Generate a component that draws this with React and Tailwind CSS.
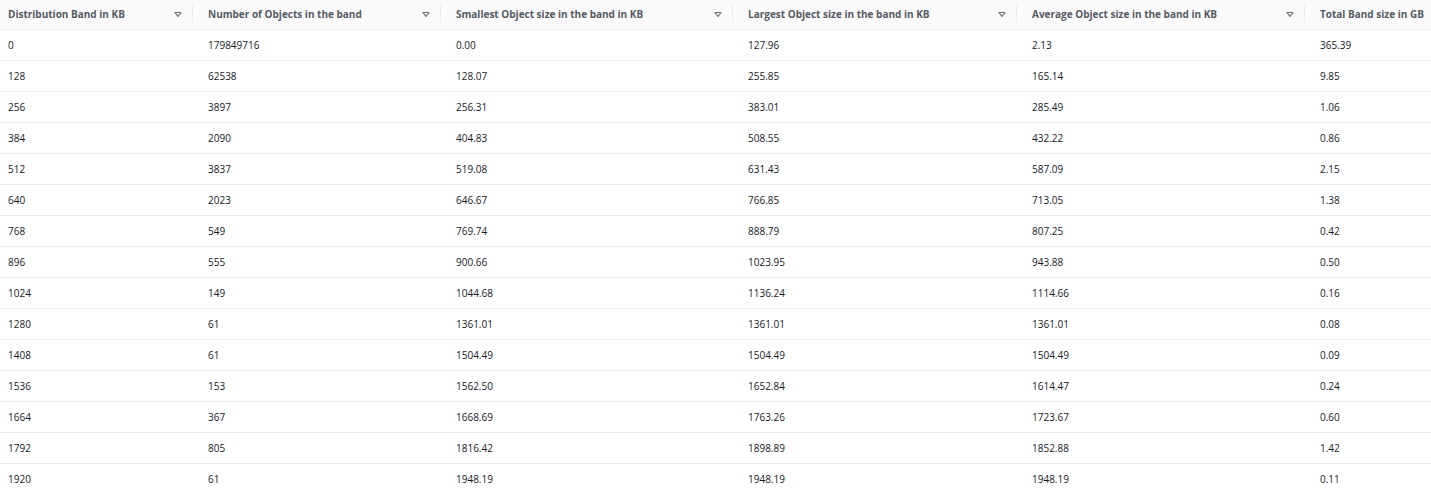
const cols = [
  { t: 'Distribution Band in KB', w: 'w-[200px]' },
  { t: 'Number of Objects in the band', w: 'w-[248px]' },
  { t: 'Smallest Object size in the band in KB', w: 'w-[292px]' },
  { t: 'Largest Object size in the band in KB', w: 'w-[284px]' },
  { t: 'Average Object size in the band in KB', w: 'w-[288px]' },
  { t: 'Total Band size in GB', w: 'flex-1' },
];

const rows = [
  ['0', '179849716', '0.00', '127.96', '2.13', '365.39'],
  ['128', '62538', '128.07', '255.85', '165.14', '9.85'],
  ['256', '3897', '256.31', '383.01', '285.49', '1.06'],
  ['384', '2090', '404.83', '508.55', '432.22', '0.86'],
  ['512', '3837', '519.08', '631.43', '587.09', '2.15'],
  ['640', '2023', '646.67', '766.85', '713.05', '1.38'],
  ['768', '549', '769.74', '888.79', '807.25', '0.42'],
  ['896', '555', '900.66', '1023.95', '943.88', '0.50'],
  ['1024', '149', '1044.68', '1136.24', '1114.66', '0.16'],
  ['1280', '61', '1361.01', '1361.01', '1361.01', '0.08'],
  ['1408', '61', '1504.49', '1504.49', '1504.49', '0.09'],
  ['1536', '153', '1562.50', '1652.84', '1614.47', '0.24'],
  ['1664', '367', '1668.69', '1763.26', '1723.67', '0.60'],
  ['1792', '805', '1816.42', '1898.89', '1852.88', '1.42'],
  ['1920', '61', '1948.19', '1948.19', '1948.19', '0.11'],
];

const SortIcon = () => (
  <svg width="8" height="7" viewBox="0 0 8 7" className="shrink-0">
    <path d="M1 1.5 H7 L4 5.5 Z" fill="none" stroke="#687078" strokeWidth="1.2" strokeLinejoin="round" />
  </svg>
);

export default function App() {
  return (
    <div className="w-[1431px] h-[494px] overflow-hidden bg-white text-[10px] text-[#16191f]" style={{ fontFamily: '"Open Sans", "Liberation Sans", sans-serif' }}>
      <div className="flex h-[30px] bg-[#fafafa] border-b border-[#eaeded]">
        {cols.map((c, i) => (
          <div key={i} className={`${c.w} shrink-0 flex items-center pl-2 pb-[1px] font-bold text-[#545b64]`}>
            <span className="flex-1 whitespace-nowrap">{c.t}</span>
            {i < 5 && (
              <div className="flex items-center gap-[10px] pr-[7px]">
                <SortIcon />
                <div className="w-px h-[18px] bg-[#eaeded]" />
              </div>
            )}
          </div>
        ))}
      </div>
      {rows.map((r, ri) => (
        <div key={ri} className="flex h-[31px] border-b border-[#eaeded]">
          {r.map((v, i) => (
            <div key={i} className={`${cols[i].w} shrink-0 flex items-center pl-2`}>{v}</div>
          ))}
        </div>
      ))}
    </div>
  );
}
